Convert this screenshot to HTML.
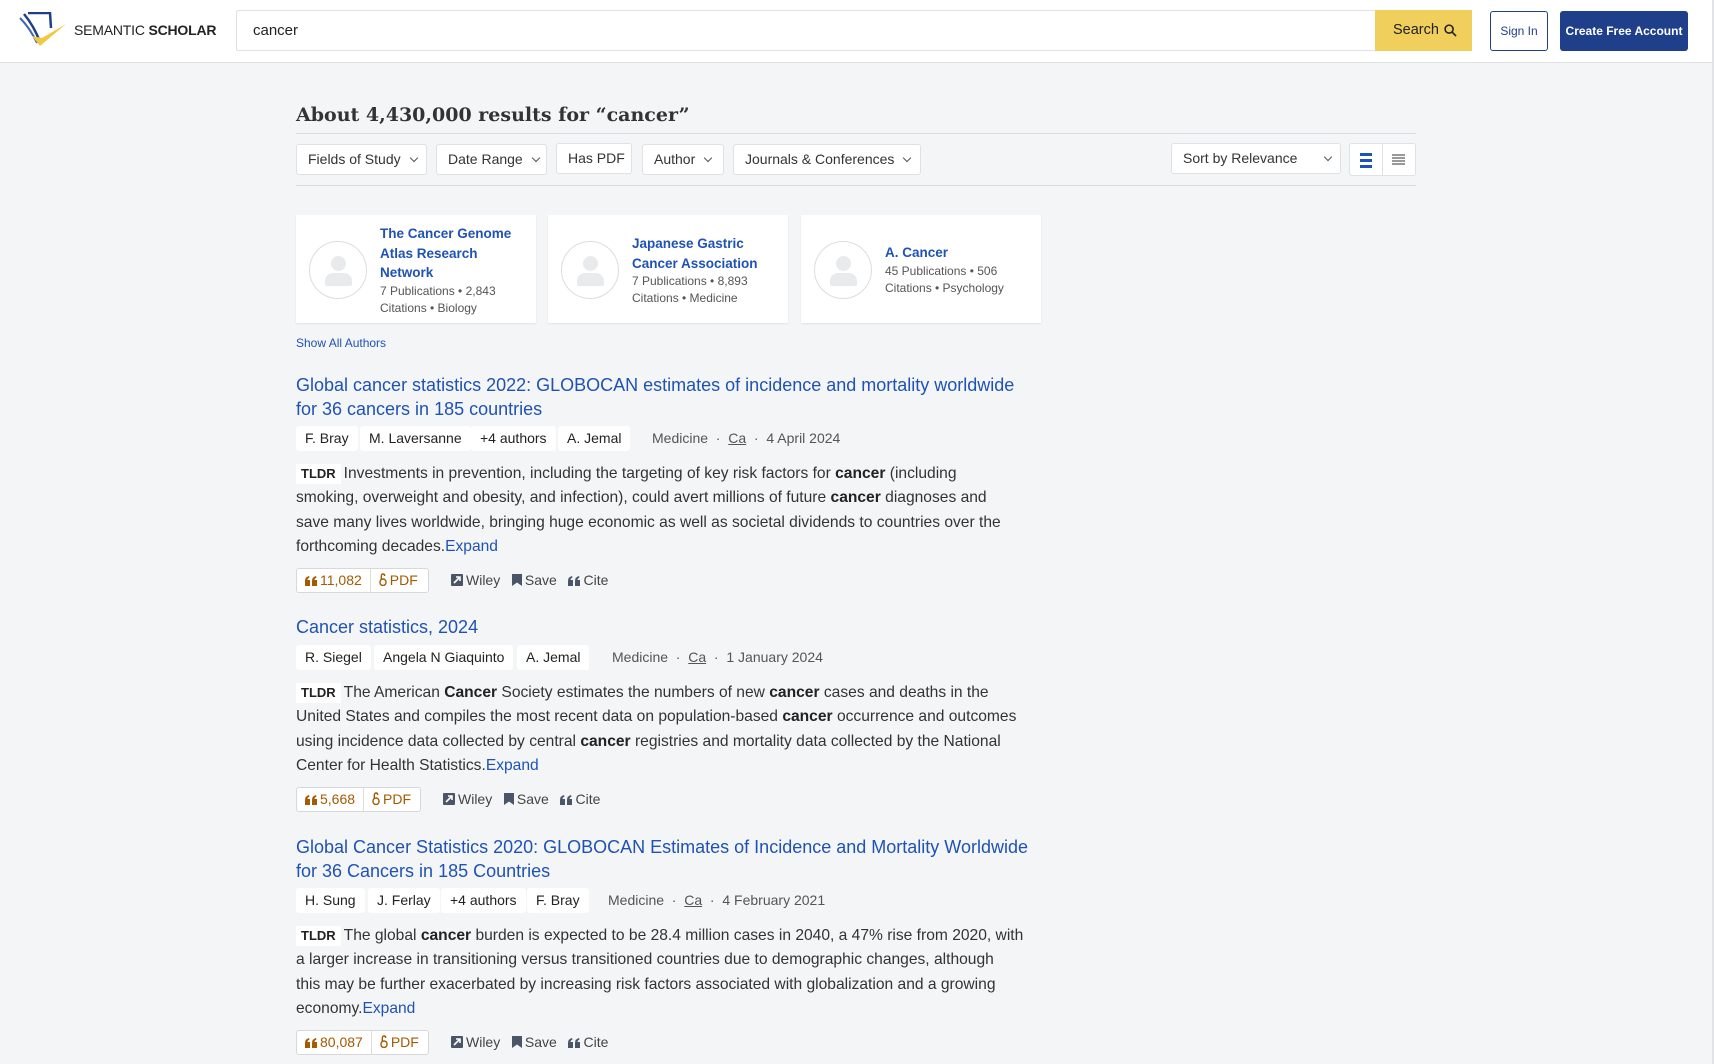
<!DOCTYPE html>
<html><head><meta charset="utf-8">
<style>
*{margin:0;padding:0;box-sizing:border-box}
body{width:1714px;height:1064px;overflow:hidden;background:#f4f5f7;font-family:"Liberation Sans",sans-serif;color:#333;position:relative}
.a{position:absolute;white-space:nowrap}
.hdr{position:absolute;left:0;top:0;width:1714px;height:63px;background:#fff;border-bottom:1px solid #dfe1e5}
.box{position:absolute;background:#fff;border:1px solid #dfe1e5;border-radius:3px}
.flt{position:absolute;top:144px;height:31px;background:#fff;border:1px solid #dfe1e5;border-radius:3px;font-size:14px;line-height:29px;padding-left:11px;color:#333}
.chev{display:inline-block;width:6px;height:6px;border-right:1.3px solid #555;border-bottom:1.3px solid #555;transform:rotate(45deg);margin-left:10px;position:relative;top:-3px}
.blue{color:#1f52b5}
.title{font-size:18px;line-height:24px;color:#1f52b5}
.chip{position:absolute;height:25px;background:#fff;border-radius:3px;font-size:14px;line-height:25px;padding:0 9px;color:#222}
.meta{font-size:14px;color:#555;line-height:25px}
.tldr{font-size:15.6px;line-height:24.4px;color:#333}
.tldr b{color:#222}
.tag{display:inline-block;background:#fff;font-size:13px;font-weight:bold;padding:0 5px;line-height:20px;margin-right:3px;color:#222}
.ex{color:#1f52b5}
.cb{position:absolute;height:25px;background:#fff;border:1px solid #d6d8dc;border-radius:3px;font-size:14px;line-height:23px;color:#a35a00}
.cb span{display:inline-block;padding:0 8px}
.act{font-size:14px;color:#444;line-height:25px}
.act svg,.cb svg{vertical-align:-1px;margin-right:3px}
.card{position:absolute;top:215px;height:108px;background:#fff;box-shadow:0 1px 2px rgba(0,0,0,.08)}
.av{position:absolute;left:13px;top:26px;width:58px;height:58px;border-radius:50%;border:1px solid #ddd}
.av:before{content:"";position:absolute;left:21px;top:14px;width:15px;height:15px;border-radius:50%;background:#e9eaec}
.av:after{content:"";position:absolute;left:15px;top:31px;width:27px;height:13px;border-radius:8px 8px 2px 2px;background:#e9eaec}
.cn{position:absolute;left:84px;font-size:13.5px;line-height:19.5px;color:#1f52b5;font-weight:bold}
.cs{font-size:12px;line-height:17px;color:#555;font-weight:normal}
</style></head><body>
<svg width="0" height="0" style="position:absolute">
<defs>
<symbol id="ext" viewBox="0 0 12 12"><rect x="0" y="0" width="12" height="12" rx="1" fill="#4a5568"/><path d="M3 9 L9 3 M5 3 H9 V7" stroke="#fff" stroke-width="1.6" fill="none"/></symbol>
<symbol id="bm" viewBox="0 0 10 12"><path d="M0 0 H10 V12 L5 8.5 L0 12 Z" fill="#4a5568"/></symbol>
<symbol id="q" viewBox="0 0 12 10"><path d="M0 10 V5 Q0 1 4 0 L4.5 1.5 Q2.5 2.5 2.5 4 H5 V10 Z M7 10 V5 Q7 1 11 0 L11.5 1.5 Q9.5 2.5 9.5 4 H12 V10 Z"/></symbol>
<symbol id="oa" viewBox="0 0 8 13"><rect x="1" y="6" width="6" height="6.5" rx="3" stroke="currentColor" stroke-width="1.4" fill="none"/><path d="M2.3 6.3 V3.5 Q2.3 1 4 1 Q5.7 1 5.7 3" stroke="currentColor" stroke-width="1.4" fill="none"/></symbol>
</defs></svg>
<div class="hdr"></div>
<svg class="a" style="left:18px;top:12px" width="50" height="36" viewBox="0 0 50 36">
<path d="M6 2 Q16 14 22 30" stroke="#1f3f8a" stroke-width="2.5" fill="none"/>
<path d="M2 6 Q12 16 19 31" stroke="#3f63b5" stroke-width="2" fill="none"/>
<path d="M10 1 L32 1 L33 16" stroke="#1f3f8a" stroke-width="2.5" fill="none"/>
<path d="M14 24 L22 34 L48 12 L24 26 Z" fill="#f1c744"/>
</svg>
<div class="a" style="left:74px;top:22px;font-size:14px;color:#222;letter-spacing:-.2px">SEMANTIC <b>SCHOLAR</b></div>
<div class="box" style="left:236px;top:10px;width:1140px;height:41px;border-radius:2px 0 0 2px"></div>
<div class="a" style="left:253px;top:22px;font-size:15px;color:#222">cancer</div>
<div class="a" style="left:1375px;top:10px;width:97px;height:41px;background:#f0cf5c;font-size:14.5px;line-height:41px;padding-left:18px;color:#222">Search
<svg style="position:absolute;left:69px;top:14px" width="13" height="13" viewBox="0 0 14 14"><circle cx="5.5" cy="5.5" r="4.3" stroke="#222" stroke-width="1.7" fill="none"/><path d="M8.7 8.7 L13 13" stroke="#222" stroke-width="1.8"/></svg></div>
<div class="a" style="left:1490px;top:11px;width:58px;height:40px;border:1px solid #1f3f8a;border-radius:3px;font-size:12px;line-height:38px;text-align:center;color:#1f3f8a;background:#fff">Sign In</div>
<div class="a" style="left:1560px;top:11px;width:128px;height:40px;background:#1f3f8a;border-radius:3px;font-size:12px;font-weight:bold;line-height:40px;text-align:center;color:#fff">Create Free Account</div>
<div class="a" style="left:1712px;top:0;width:2px;height:1064px;background:#e1e3e6"></div>

<div class="a" style="left:296px;top:104px;font-family:'DejaVu Serif','Liberation Serif',serif;font-weight:bold;font-size:19px;color:#333">About 4,430,000 results for “cancer”</div>
<div class="a" style="left:296px;top:133px;width:1120px;height:1px;background:#d9dbde"></div>
<div class="flt" style="left:296px;width:131px">Fields of Study<span class="chev"></span></div>
<div class="flt" style="left:436px;width:111px">Date Range<span class="chev"></span></div>
<div class="flt" style="left:556px;width:76px;top:143px">Has PDF</div>
<div class="flt" style="left:642px;width:82px">Author<span class="chev"></span></div>
<div class="flt" style="left:733px;width:188px">Journals &amp; Conferences<span class="chev"></span></div>
<div class="flt" style="left:1171px;width:170px;top:143px">Sort by Relevance<span class="chev" style="margin-left:28px"></span></div>
<div class="box" style="left:1349px;top:143px;width:67px;height:33px"></div>
<div class="a" style="left:1382px;top:143px;width:1px;height:33px;background:#dfe1e5"></div>
<div class="a" style="left:1360px;top:153px;width:12px;height:2.5px;background:#1f52b5;box-shadow:0 6px 0 #1f52b5,0 12px 0 #1f52b5"></div>
<div class="a" style="left:1392px;top:154px;width:13px;height:1.5px;background:#999;box-shadow:0 3px 0 #999,0 6px 0 #999,0 9px 0 #999"></div>
<div class="a" style="left:296px;top:185px;width:1120px;height:1px;background:#d9dbde"></div>

<div class="card" style="left:296px;width:240px"><div class="av"></div><div class="cn" style="top:9px">The Cancer Genome<br>Atlas Research<br>Network<div class="cs">7 Publications • 2,843<br>Citations • Biology</div></div></div>
<div class="card" style="left:548px;width:240px"><div class="av"></div><div class="cn" style="top:19px">Japanese Gastric<br>Cancer Association<div class="cs">7 Publications • 8,893<br>Citations • Medicine</div></div></div>
<div class="card" style="left:801px;width:240px"><div class="av"></div><div class="cn" style="top:28px">A. Cancer<div class="cs">45 Publications • 506<br>Citations • Psychology</div></div></div>
<div class="a blue" style="left:296px;top:336px;font-size:12px">Show All Authors</div>

<!-- paper 1 -->
<div class="a title" style="left:296px;top:373px">Global cancer statistics 2022: GLOBOCAN estimates of incidence and mortality worldwide<br>for 36 cancers in 185 countries</div>
<div class="chip" style="left:296px;top:426px">F. Bray</div>
<div class="chip" style="left:360px;top:426px">M. Laversanne</div>
<div class="chip" style="left:471px;top:426px">+4 authors</div>
<div class="chip" style="left:558px;top:426px">A. Jemal</div>
<div class="a meta" style="left:652px;top:426px">Medicine &nbsp;·&nbsp; <u>Ca</u> &nbsp;·&nbsp; 4 April 2024</div>
<div class="a tldr" style="left:296px;top:462px"><span class="tag">TLDR</span>Investments in prevention, including the targeting of key risk factors for <b>cancer</b> (including<br>smoking, overweight and obesity, and infection), could avert millions of future <b>cancer</b> diagnoses and<br>save many lives worldwide, bringing huge economic as well as societal dividends to countries over the<br>forthcoming decades.<span class="ex">Expand</span></div>
<div class="cb" style="left:296px;top:568px;width:133px"><span style="border-right:1px solid #ddd"><svg width="12" height="10" fill="#a35a00"><use href="#q"/></svg>11,082</span><span><svg width="8" height="13" style="color:#a35a00"><use href="#oa"/></svg>PDF</span></div>
<div class="a act" style="left:451px;top:568px"><svg width="12" height="12"><use href="#ext"/></svg>Wiley &nbsp;&nbsp;<svg width="10" height="12"><use href="#bm"/></svg>Save &nbsp;&nbsp;<svg width="12" height="10" fill="#4a5568"><use href="#q"/></svg>Cite</div>

<!-- paper 2 -->
<div class="a title" style="left:296px;top:615px">Cancer statistics, 2024</div>
<div class="chip" style="left:296px;top:645px">R. Siegel</div>
<div class="chip" style="left:374px;top:645px">Angela N Giaquinto</div>
<div class="chip" style="left:517px;top:645px">A. Jemal</div>
<div class="a meta" style="left:612px;top:645px">Medicine &nbsp;·&nbsp; <u>Ca</u> &nbsp;·&nbsp; 1 January 2024</div>
<div class="a tldr" style="left:296px;top:681px"><span class="tag">TLDR</span>The American <b>Cancer</b> Society estimates the numbers of new <b>cancer</b> cases and deaths in the<br>United States and compiles the most recent data on population-based <b>cancer</b> occurrence and outcomes<br>using incidence data collected by central <b>cancer</b> registries and mortality data collected by the National<br>Center for Health Statistics.<span class="ex">Expand</span></div>
<div class="cb" style="left:296px;top:787px;width:125px"><span style="border-right:1px solid #ddd"><svg width="12" height="10" fill="#a35a00"><use href="#q"/></svg>5,668</span><span><svg width="8" height="13" style="color:#a35a00"><use href="#oa"/></svg>PDF</span></div>
<div class="a act" style="left:443px;top:787px"><svg width="12" height="12"><use href="#ext"/></svg>Wiley &nbsp;&nbsp;<svg width="10" height="12"><use href="#bm"/></svg>Save &nbsp;&nbsp;<svg width="12" height="10" fill="#4a5568"><use href="#q"/></svg>Cite</div>

<!-- paper 3 -->
<div class="a title" style="left:296px;top:835px">Global Cancer Statistics 2020: GLOBOCAN Estimates of Incidence and Mortality Worldwide<br>for 36 Cancers in 185 Countries</div>
<div class="chip" style="left:296px;top:888px">H. Sung</div>
<div class="chip" style="left:368px;top:888px">J. Ferlay</div>
<div class="chip" style="left:441px;top:888px">+4 authors</div>
<div class="chip" style="left:527px;top:888px">F. Bray</div>
<div class="a meta" style="left:608px;top:888px">Medicine &nbsp;·&nbsp; <u>Ca</u> &nbsp;·&nbsp; 4 February 2021</div>
<div class="a tldr" style="left:296px;top:924px"><span class="tag">TLDR</span>The global <b>cancer</b> burden is expected to be 28.4 million cases in 2040, a 47% rise from 2020, with<br>a larger increase in transitioning versus transitioned countries due to demographic changes, although<br>this may be further exacerbated by increasing risk factors associated with globalization and a growing<br>economy.<span class="ex">Expand</span></div>
<div class="cb" style="left:296px;top:1030px;width:133px"><span style="border-right:1px solid #ddd"><svg width="12" height="10" fill="#a35a00"><use href="#q"/></svg>80,087</span><span><svg width="8" height="13" style="color:#a35a00"><use href="#oa"/></svg>PDF</span></div>
<div class="a act" style="left:451px;top:1030px"><svg width="12" height="12"><use href="#ext"/></svg>Wiley &nbsp;&nbsp;<svg width="10" height="12"><use href="#bm"/></svg>Save &nbsp;&nbsp;<svg width="12" height="10" fill="#4a5568"><use href="#q"/></svg>Cite</div>
</body></html>
